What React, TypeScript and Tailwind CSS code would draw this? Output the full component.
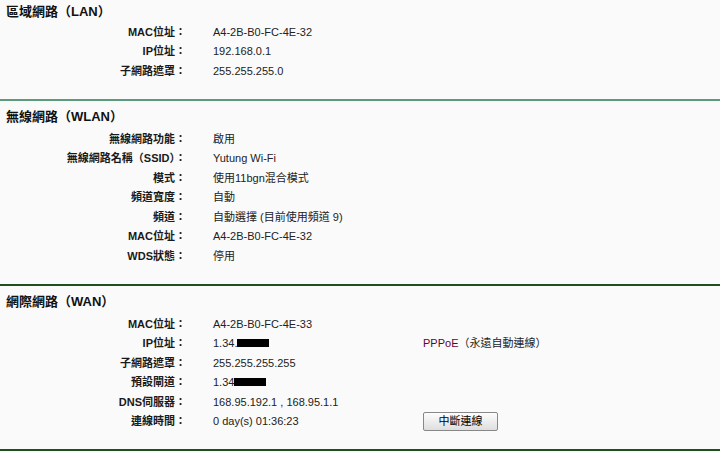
const font = { fontFamily: '"Liberation Sans", Arial, "Noto Sans CJK TC", sans-serif' }

type Row = { label: string; value: React.ReactNode; extra?: React.ReactNode }

function Redact({ prefix }: { prefix: string }) {
  return (
    <span className="inline-flex items-center">
      {prefix}
      <span className="inline-block w-[32px] h-[8px] bg-black" />
    </span>
  )
}

function Section({ title, rows, titleH, line }: { title: string; rows: Row[]; titleH: string; line: string }) {
  return (
    <div className={`flex flex-col pb-[18px] ${line}`}>
      <div className={`flex items-center pl-[6px] text-[13px] font-bold text-[#111] ${titleH}`}>{title}</div>
      {rows.map((r) => (
        <div key={r.label} className="flex items-center h-[19.5px] text-[11px]">
          <div className="w-[186px] shrink-0 text-right font-bold text-[#1a1a1a]">{r.label}</div>
          <div className="w-[211px] shrink-0 pl-[27px] text-[#222]">{r.value}</div>
          <div className="pl-[26px]">{r.extra}</div>
        </div>
      ))}
    </div>
  )
}

export default function App() {
  return (
    <div className="w-[720px] h-[453px] overflow-hidden bg-[#fafafa] flex flex-col" style={font}>
      <Section
        title="區域網路（LAN）"
        titleH="h-[22px] pt-[2px]"
        line="border-b-2 border-[#5b9b7b]"
        rows={[
          { label: 'MAC位址：', value: 'A4-2B-B0-FC-4E-32' },
          { label: 'IP位址：', value: '192.168.0.1' },
          { label: '子網路遮罩：', value: '255.255.255.0' },
        ]}
      />
      <Section
        title="無線網路（WLAN）"
        titleH="h-[24.5px] mt-[4px]"
        line="border-b-2 border-[#1f4f1f]"
        rows={[
          { label: '無線網路功能：', value: '啟用' },
          { label: '無線網路名稱（SSID）：', value: 'Yutung Wi-Fi' },
          { label: '模式：', value: '使用11bgn混合模式' },
          { label: '頻道寬度：', value: '自動' },
          { label: '頻道：', value: '自動選擇 (目前使用頻道 9)' },
          { label: 'MAC位址：', value: 'A4-2B-B0-FC-4E-32' },
          { label: 'WDS狀態：', value: '停用' },
        ]}
      />
      <Section
        title="網際網路（WAN）"
        titleH="h-[24.5px] mt-[4px]"
        line="border-b-2 border-[#1f4f1f]"
        rows={[
          { label: 'MAC位址：', value: 'A4-2B-B0-FC-4E-33' },
          {
            label: 'IP位址：',
            value: <Redact prefix="1.34." />,
            extra: (
              <span className="text-[11px] text-[#222]">
                <span className="text-[#660033]">PPPoE</span>（永遠自動連線）
              </span>
            ),
          },
          { label: '子網路遮罩：', value: '255.255.255.255' },
          { label: '預設閘道：', value: <Redact prefix="1.34" /> },
          { label: 'DNS伺服器：', value: '168.95.192.1 , 168.95.1.1' },
          {
            label: '連線時間：',
            value: '0 day(s) 01:36:23',
            extra: (
              <button className="w-[75px] h-[19px] flex items-center justify-center text-[11px] text-black border border-[#888] rounded-[2px] bg-gradient-to-b from-[#fdfdfd] to-[#dedede]">
                中斷連線
              </button>
            ),
          },
        ]}
      />
    </div>
  )
}
